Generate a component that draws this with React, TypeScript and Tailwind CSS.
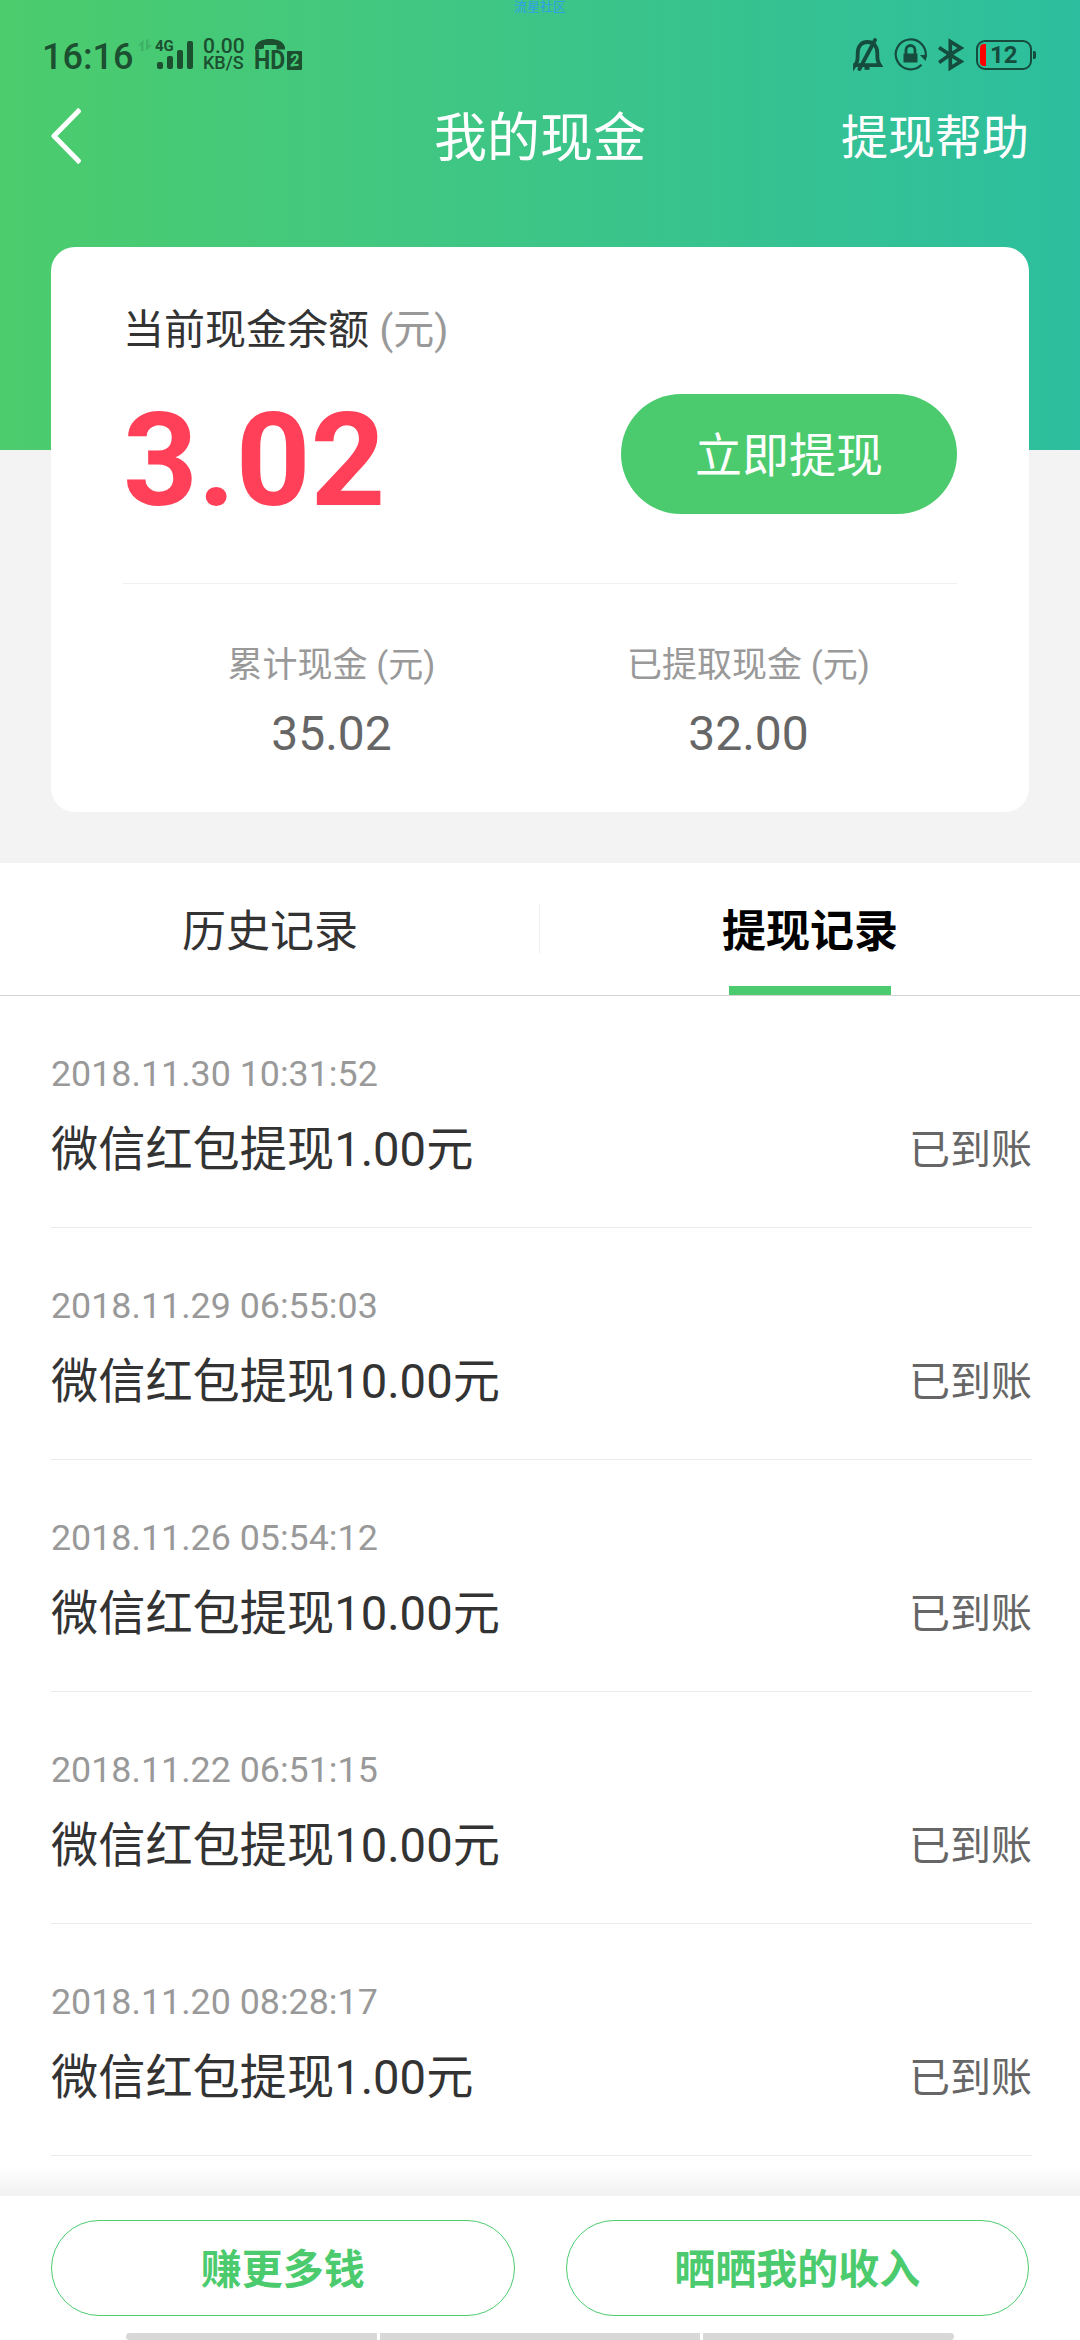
import { Fragment, useState } from "react";

const records = [
  { time: "2018.11.30 10:31:52", amount: "1.00", status: "已到账" },
  { time: "2018.11.29 06:55:03", amount: "10.00", status: "已到账" },
  { time: "2018.11.26 05:54:12", amount: "10.00", status: "已到账" },
  { time: "2018.11.22 06:51:15", amount: "10.00", status: "已到账" },
  { time: "2018.11.20 08:28:17", amount: "1.00", status: "已到账" },
];

const stats = [
  { label: "累计现金 (元)", value: "35.02" },
  { label: "已提取现金 (元)", value: "32.00" },
];

const tabs = ["历史记录", "提现记录"];

function SignalIcon() {
  return (
    <div className="relative ml-[6px]">
      <svg width="56" height="33" viewBox="0 0 56 33" className="fill-current">
        <path d="M0 7.5 5.5 1.5V13H3V7.5ZM8 1.5h2.5V7H14L8 13Z" opacity="0.2" />
        <rect x="19" y="24" width="6" height="7" rx="2" />
        <rect x="29" y="18" width="6" height="13" rx="2" />
        <rect x="39" y="12" width="6" height="19" rx="2" />
        <rect x="49" y="3" width="6" height="28" rx="2" />
      </svg>
      <span className="absolute top-0 left-[17px] text-[15px] leading-[17px] font-bold">4G</span>
    </div>
  );
}

function HdCallIcon() {
  return (
    <div className="relative ml-[11px]">
      <svg width="48" height="33" viewBox="0 0 48 33" className="fill-current">
        <path d="M0 12V9C2 3 8 1 15 1s13 2 15 8v2.5H21.5V7H9v3.5Z" />
        <rect x="32" y="13" width="15" height="19" rx="1" />
      </svg>
      <span className="absolute top-[8px] left-[-1px] origin-left scale-x-[0.92] text-[25px] leading-[29px] font-bold">HD</span>
      <span className="absolute top-[13px] left-[35px] -rotate-6 text-[17px] leading-[19px] font-bold text-[#45c876] italic">2</span>
    </div>
  );
}

function BellOffIcon() {
  return (
    <svg width="31" height="33" viewBox="0 0 31 33" className="fill-none stroke-current" strokeWidth="3.8">
      <path d="M3 27.2h25c-2.7-4-2.7-6-2.7-12C25.3 7.5 21 4 15.5 4S5.7 7.5 5.7 15.3c0 6 0 8-2.7 12Z" />
      <path d="M23 2 7.5 31" strokeLinecap="round" />
      <path d="M12.5 30.3h5" strokeWidth="3" />
    </svg>
  );
}

function RotationLockIcon() {
  return (
    <svg width="33" height="33" viewBox="0 0 33 33" className="ml-[11px] fill-none stroke-current" strokeWidth="2.2">
      <path d="M31.4 19.5A15 15 0 1 0 27.5 26.8" />
      <path d="M26 17h7l-1.5 6Z" className="fill-current stroke-none" />
      <path d="M9.5 15.5h14v9h-14Z" className="fill-current stroke-none" />
      <path d="M12 16v-4a4.5 4.5 0 0 1 9 0v4" strokeWidth="2.8" />
    </svg>
  );
}

function BluetoothIcon() {
  return (
    <svg width="26" height="33" viewBox="0 0 26 33" className="ml-[11px] fill-none stroke-current" strokeWidth="3.7">
      <path d="M1 9.5 12 16.8 1 24.5M12 16.8 22.8 10 12.3 3.5v26.5l10.5-6.5L12 16.8" />
    </svg>
  );
}

function StatusBar() {
  return (
    <div className="flex h-20 items-start pt-[38px] pr-[44px] pl-[42px] font-['Roboto'] text-[#1c4f30]">
      <span className="w-[90px] text-[36px] leading-[38px] font-medium">16:16</span>
      <SignalIcon />
      <div className="ml-[9px] flex w-[41px] flex-col font-medium">
        <span className="text-[21px] leading-[17px]">0.00</span>
        <span className="text-[18px] leading-[16px]">KB/S</span>
      </div>
      <HdCallIcon />
      <div className="ml-auto flex items-start text-[#154c3d]">
        <BellOffIcon />
        <RotationLockIcon />
        <BluetoothIcon />
        <div className="mt-[2px] ml-[12px] flex items-center">
          <div className="flex h-[30px] w-[56px] items-center rounded-[9px] border-2 border-current pl-[2px]">
            <span className="h-[22px] w-[6px] rounded-l-[4px] bg-[#ff0000]" />
            <span className="ml-[4px] text-[24px] leading-none font-bold">12</span>
          </div>
          <span className="ml-px h-2 w-[3px] rounded-r-[2px] bg-current" />
        </div>
      </div>
    </div>
  );
}

function NavBar() {
  return (
    <div className="grid h-[112px] grid-cols-3 items-center px-[51px] text-white">
      <button className="justify-self-start">
        <svg width="30" height="56" viewBox="0 0 30 56" className="fill-none stroke-white" strokeWidth="5">
          <path d="M29 1.5 3 28l26 26.5" strokeLinejoin="round" />
        </svg>
      </button>
      <h1 className="pt-[6px] text-center text-[53px] leading-none">我的现金</h1>
      <button className="justify-self-end pt-[3px] text-[47px] leading-none">提现帮助</button>
    </div>
  );
}

function BalanceCard() {
  return (
    <section className="relative mx-[51px] -mt-[203px] h-[565px] rounded-3xl bg-white px-[72px] pt-[53px]">
      <p className="text-[41px] leading-[60px] text-[#333]">
        当前现金余额 <span className="text-[#999]">(元)</span>
      </p>
      <div className="mt-[34px] flex h-[120px] items-center justify-between">
        <span className="pt-[14px] text-[130.5px] leading-none font-bold text-[#ff4058]">3.02</span>
        <button className="h-[120px] w-[336px] rounded-full bg-[#4ccb6e] pt-[4px] text-[47px] text-white">立即提现</button>
      </div>
      <div className="mt-[69px] grid grid-cols-2 border-t border-[#f0f0f0] pt-[57px] text-center">
        {stats.map((s) => (
          <div key={s.label}>
            <p className="text-[35px] leading-[50px] text-[#999]">{s.label}</p>
            <p className="mt-[13px] text-[48px] leading-[60px] text-[#666]">{s.value}</p>
          </div>
        ))}
      </div>
    </section>
  );
}

export default function App() {
  const [active, setActive] = useState(1);

  return (
    <div className="relative flex h-[2340px] w-[1080px] flex-col overflow-hidden bg-white font-['Roboto','Noto_Sans_CJK_SC',sans-serif]">
      {/* Watermark */}
      <span className="absolute top-0 left-[514px] text-[13px] leading-[13px] text-[#2f9fe6]">流星社区</span>

      <header className="h-[450px] shrink-0 bg-linear-to-r from-[#4ccc6c] to-[#2cbe9e]">
        <StatusBar />
        <NavBar />
      </header>

      <div className="shrink-0 bg-[#f3f3f3] pb-[51px]">
        <BalanceCard />
      </div>

      {/* Tabs */}
      <div className="flex h-[133px] shrink-0 items-center border-b border-[#d4d4d4]">
        {tabs.map((label, i) => (
          <Fragment key={label}>
            {i > 0 && <span className="-ml-px h-[50px] w-px bg-[#f0f0f0]" />}
            <button
              onClick={() => setActive(i)}
              className={
                active === i
                  ? "relative h-full flex-1 pt-[6px] text-[44px] font-bold text-black"
                  : "h-full flex-1 pt-[6px] text-[44px] text-[#333]"
              }
            >
              {label}
              {active === i && <span className="absolute bottom-0 left-1/2 h-[9px] w-[162px] -translate-x-1/2 bg-[#4ccb6e]" />}
            </button>
          </Fragment>
        ))}
      </div>

      {/* Records */}
      <ul className="flex-1 pr-[48px] pl-[51px]">
        {records.map((r) => (
          <li key={r.time} className="h-[232px] border-b border-[#ebebeb] pt-[53px]">
            <p className="text-[35.8px] leading-[50px] text-[#999]">{r.time}</p>
            <div className="mt-[16px] flex items-center justify-between">
              <span className="text-[47.2px] leading-[70px] text-[#333]">微信红包提现{r.amount}元</span>
              <span className="text-[41px] leading-[70px] text-[#666]">{r.status}</span>
            </div>
          </li>
        ))}
      </ul>

      <div className="h-[30px] shrink-0 bg-linear-to-b from-white to-[#f1f1f1]" />
      <footer className="flex h-[144px] shrink-0 flex-col bg-white">
        <div className="flex gap-[51px] px-[51px] pt-6 text-[41px] font-bold text-[#4ccb6e]">
          <button className="h-24 flex-1 rounded-full border border-[#4ccb6e] pt-[6px]">赚更多钱</button>
          <button className="h-24 flex-1 rounded-full border border-[#4ccb6e] pt-[6px]">晒晒我的收入</button>
        </div>
        <div className="mt-auto flex h-[7px] gap-[3px] overflow-hidden px-[126px]">
          <span className="w-[251px] rounded-l-full bg-[#d8d8d8]" />
          <span className="flex-1 bg-[#d8d8d8]" />
          <span className="w-[251px] rounded-r-full bg-[#d8d8d8]" />
        </div>
      </footer>
    </div>
  );
}
